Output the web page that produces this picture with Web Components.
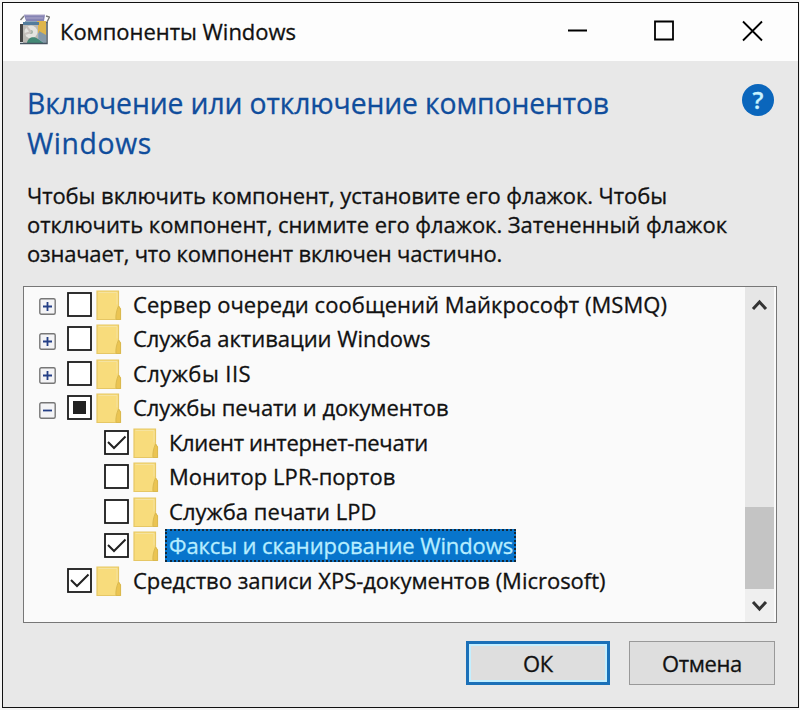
<!DOCTYPE html>
<html lang="ru"><head><meta charset="utf-8"><title>Компоненты Windows</title>
<style>
body{margin:0;width:800px;height:710px;background:#f4f4f4;font-family:"Open Sans","Noto Sans",sans-serif;font-size:22px;color:#111;overflow:hidden;-webkit-text-stroke:.3px}
</style></head><body>
<features-window></features-window>
<script>
const define=(name,html,init)=>customElements.define(name,class extends HTMLElement{
  constructor(){super();this.attachShadow({mode:'open'}).innerHTML=html;}
  connectedCallback(){if(init)init.call(this,this.shadowRoot);}
});

/* One line of text, tracked to fill the width given in "w". */
define('fit-text',`<style>:host{display:block;white-space:pre}span{display:inline-block}</style><span></span>`,function(r){
  const s=r.querySelector('span');s.textContent=this.getAttribute('t');
  const w=+this.getAttribute('w'),n=s.textContent.length;
  s.style.letterSpacing=((w-s.getBoundingClientRect().width)/n)+'px';
});

define('app-icon',`<style>:host{display:block;width:32px;height:32px}svg{display:block}</style>
<svg width="32" height="32" viewBox="0 0 32 32">
<path d="M6 2L2.500 6M28 2l3.500 1-3 6" fill="none" stroke="#777" stroke-width="1.4"/>
<path d="M6 1h21l-1 6H8z" fill="#8584b4"/><path d="M6 1h21M8 4h17" stroke="#b0a7c9" stroke-width="1.2"/>
<path d="M7 7h21v22H7z" fill="#8ca5ba"/><path d="M19 7h9v16l-9-5z" fill="#deb54c"/>
<path d="M2 10h3v18H2z" fill="#444"/><path d="M5 10h15v19H5z" fill="#bbb9b4"/><path d="M5 8h16v3H5z" fill="#537c9c"/>
<circle cx="13" cy="18" r="6.500" fill="#e4e4e0"/><circle cx="13" cy="18" r="2" fill="#a2b2a5"/><path d="M8 12l5 6M7 20l6-2" stroke="#c7c1bd" stroke-width="2"/>
<path d="M9 29c1-6 7-7 11-4l7 5z" fill="#438875"/><path d="M21 17l7 4v9l-7-5z" fill="#8499a8"/>
<path d="M2 29.500h27V8" fill="none" stroke="#465360" stroke-width="1.500"/></svg>`);

define('title-bar',`<style>:host{display:flex;height:58px;background:#fdfdfd;align-items:flex-start;box-sizing:border-box;padding:11px 34px 0 15px}
fit-text{line-height:35px;margin:0 0 0 10px;flex:1}svg{display:block;margin-top:5px}app-icon svg{margin:0}</style>
<app-icon></app-icon><fit-text t="Компоненты Windows" w="236"></fit-text>
<svg width="198" height="26" viewBox="0 0 198 26" fill="none" stroke="#000" stroke-width="1.8"><path d="M2 11.500h19M89 2.500h18v18H89zM177 2.500l19 19M196 2.500l-19 19"/></svg>`);

define('help-badge',`<style>:host{display:flex;margin-top:1px;width:32px;height:32px;border-radius:50%;background:#0a66bc;color:#c9f4ff;font:600 24px/32px "Open Sans",sans-serif;justify-content:center}</style><span>?</span>`);

define('page-intro',`<style>:host{display:block;padding:22px 24px 0 24px;height:225px;box-sizing:border-box}
.h{display:flex;justify-content:space-between;color:#104d9c;font-size:28.300px;line-height:40px}.p{margin-top:18px;line-height:29px}</style>
<div class="h"><div><fit-text t="Включение или отключение компонентов" w="582"></fit-text><fit-text t="Windows" w="125"></fit-text></div><help-badge></help-badge></div>
<div class="p"><fit-text t="Чтобы включить компонент, установите его флажок. Чтобы" w="640"></fit-text>
<fit-text t="отключить компонент, снимите его флажок. Затененный флажок" w="700"></fit-text>
<fit-text t="означает, что компонент включен частично." w="475"></fit-text></div>`);

define('tree-expander',`<style>:host{display:block;width:17px;height:17px}</style>
<svg width="17" height="17" style="display:block" fill="none"><rect x=".8" y=".8" width="15.400" height="15.400" rx="1.500" fill="#f4f4f6" stroke="#777" stroke-width="1.400"/><path class="m" stroke="#243f86" stroke-width="1.800"/></svg>`,function(r){
  r.querySelector('.m').setAttribute('d',this.getAttribute('kind')==='+'?'M4 8.500h9M8.500 4v9':'M4 8.500h9');
});

define('check-box',`<style>:host{display:block;width:25px;height:25px}</style>
<svg width="25" height="25" style="display:block"><rect x="1" y="1" width="23" height="23" fill="#fff" stroke="#1a1a1a" stroke-width="1.800"/><g></g></svg>`,function(r){
  const s=this.getAttribute('state');
  r.querySelector('g').innerHTML=s==='on'?'<path d="M4 12l6 6L21.500 6.500" fill="none" stroke="#222" stroke-width="2"/>':s==='mixed'?'<path d="M6 6h13v13H6z" fill="#222"/>':'';
});

define('folder-icon',`<style>:host{display:block;width:26px;height:31px}</style>
<svg width="26" height="31" style="display:block"><path d="M1 1h21.500V16l2 3v10.500H1z" fill="#f8dc7c" stroke="#e6c765" stroke-width="1.200"/><path d="M22.500 16l2 3v10.500h-4.500c-.5-4 .5-9 2.500-13.500" fill="#ebc452" stroke="#dab94f"/><path d="M2.500 2.500h18.500v12" fill="none" stroke="#f5e3a0"/></svg>`);

define('tree-row',`<style>:host{display:flex;height:34.55px;align-items:center;box-sizing:border-box;padding-left:15px}
.slot{width:17px;padding-top:5px;margin-right:11px}:host([child]) .slot{margin-right:48px}folder-icon{margin:2px 0 0 4px}
.label{margin-left:7px;padding:0 0 0 4px;height:33px;line-height:32px;box-sizing:border-box}
:host([child]) .label{margin-left:6px}
:host([selected]) .label{background:#0875cc;color:#b7edff;outline:2px dotted #142838;outline-offset:-2px;width:351px}</style>
<div class="slot"></div><check-box></check-box><folder-icon></folder-icon><div class="label"></div>`,function(r){
  const a=n=>this.getAttribute(n);
  if(a('kind'))r.querySelector('.slot').innerHTML=`<tree-expander kind="${a('kind')}"></tree-expander>`;
  const old=r.querySelector('check-box'),box=document.createElement('check-box');
  box.setAttribute('state',a('state')||'off');old.replaceWith(box);
  r.querySelector('.label').innerHTML=`<fit-text t="${a('t')}" w="${a('w')}"></fit-text>`;
});

define('scroll-bar',`<style>:host{display:flex;flex-direction:column;width:29px;background:#e6e6e6;margin-right:2px}
svg{display:block}.track{flex:1}.thumb{height:82px;background:#c4c4c4}</style>
<svg width="29" height="32" fill="none" stroke="#333" stroke-width="3"><path d="M8 22l6.500-7 6.500 7"/></svg><div class="track"></div><div class="thumb"></div>
<svg width="29" height="33" fill="none" stroke="#333" stroke-width="3" style="background:#efefef"><path d="M8 13l6.500 7 6.500-7"/></svg>`);

define('feature-list',`<style>:host{display:flex;box-sizing:border-box;margin:0 21px 0 20px;height:337px;border:1.500px solid #777;background:#fafafa}.rows{flex:1;margin-top:-.2px}</style>
<div class="rows">
<tree-row kind="+" t="Сервер очереди сообщений Майкрософт (MSMQ)" w="534"></tree-row>
<tree-row kind="+" t="Служба активации Windows" w="297.500"></tree-row>
<tree-row kind="+" t="Службы IIS" w="118"></tree-row>
<tree-row kind="-" state="mixed" t="Службы печати и документов" w="315.500"></tree-row>
<tree-row child state="on" t="Клиент интернет-печати" w="259"></tree-row>
<tree-row child t="Монитор LPR-портов" w="226.500"></tree-row>
<tree-row child t="Служба печати LPD" w="207.500"></tree-row>
<tree-row child selected state="on" t="Факсы и сканирование Windows" w="344"></tree-row>
<tree-row state="on" t="Средство записи XPS-документов (Microsoft)" w="472.500"></tree-row>
</div><scroll-bar></scroll-bar>`);

define('dialog-button',`<style>:host{display:flex;box-sizing:border-box;width:146px;height:44px;justify-content:center;background:#dedede;border:1.500px solid #999;line-height:42px}
:host([primary]){width:144px;border:3px solid #1b70b8;line-height:38px;box-shadow:inset 0 0 0 2px #c4efff}</style><slot></slot>`);

define('features-window',`<style>:host{display:block;box-sizing:border-box;width:797px;height:706px;margin:2px 0 0 2px;border:1.500px solid #111;background:#e8e8e8;overflow:hidden}
.buttons{display:flex;justify-content:flex-end;gap:19px;padding:18px 23px 0 0}</style>
<title-bar></title-bar><page-intro></page-intro><feature-list></feature-list>
<div class="buttons"><dialog-button primary><fit-text t="ОК" w="30"></fit-text></dialog-button><dialog-button><fit-text t="Отмена" w="80"></fit-text></dialog-button></div>`);
</script></body></html>
